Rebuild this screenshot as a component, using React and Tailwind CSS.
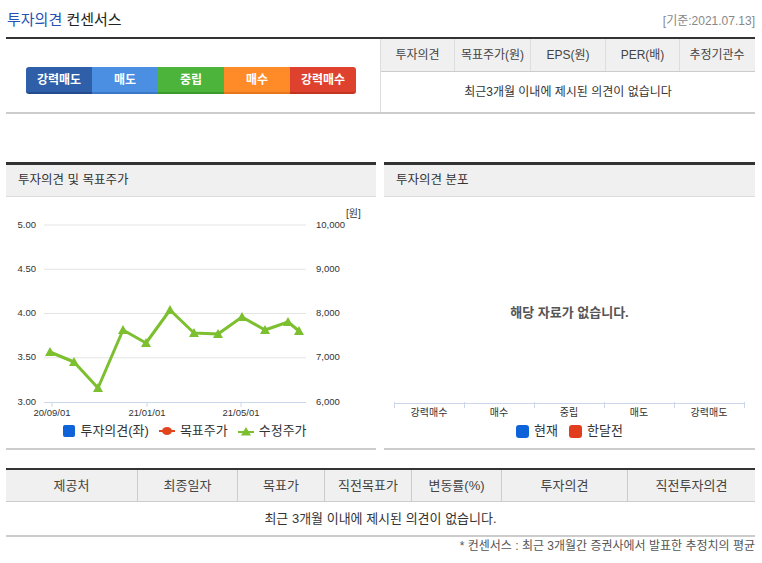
import React from 'react';

const topCols = [
  { label: '투자의견', w: 'w-[74px]' },
  { label: '목표주가(원)', w: 'w-[76px]' },
  { label: 'EPS(원)', w: 'w-[75px]' },
  { label: 'PER(배)', w: 'w-[74px]' },
  { label: '추정기관수', w: 'w-[74px]' },
];

const bottomCols = [
  { label: '제공처', w: 'w-[132px]' },
  { label: '최종일자', w: 'w-[100px]' },
  { label: '목표가', w: 'w-[87px]' },
  { label: '직전목표가', w: 'w-[87px]' },
  { label: '변동률(%)', w: 'w-[90px]' },
  { label: '투자의견', w: 'w-[126px]' },
  { label: '직전투자의견', w: 'w-[127px]' },
];

const buttons = [
  { label: '강력매도', cls: 'bg-[#2f5fa9] border-[#244c8c] rounded-l-[3px]' },
  { label: '매도', cls: 'bg-[#4b8fe2] border-[#3c78c4]' },
  { label: '중립', cls: 'bg-[#4db43b] border-[#3a9a2c]' },
  { label: '매수', cls: 'bg-[#ff8b28] border-[#e5761a]' },
  { label: '강력매수', cls: 'bg-[#df412f] border-[#c33322] rounded-r-[3px]' },
];

// 수정주가 points (x, y) in chart coords
const prices = [
  [44, 155], [68, 165], [92, 191], [117, 133], [140, 146], [164, 113],
  [188, 136], [212, 137], [236, 120], [259, 133], [282, 125], [293, 134],
];

const leftTicks = ['5.00', '4.50', '4.00', '3.50', '3.00'];
const rightTicks = ['10,000', '9,000', '8,000', '7,000', '6,000'];

function Triangle({ x, y, size = 5 }) {
  return (
    <polygon
      points={`${x - size},${y + size * 0.8} ${x + size},${y + size * 0.8} ${x},${y - size}`}
      fill="#7cbf2f"
    />
  );
}

function PriceChart() {
  const gridY = (i) => 28 + i * 44.25;
  return (
    <svg width="370" height="224" className="block">
      {leftTicks.map((t, i) => (
        <g key={t}>
          {i < 4 && <line x1="38" x2="300" y1={gridY(i)} y2={gridY(i)} stroke="#e4e4e4" strokeWidth="1" />}
          <text x="30" y={gridY(i)} textAnchor="end" dominantBaseline="middle" fontSize="9.5" fill="#333">{t}</text>
          <text x="310" y={gridY(i)} textAnchor="start" dominantBaseline="middle" fontSize="9.5" fill="#333">{rightTicks[i]}</text>
        </g>
      ))}
      <text x="340" y="20" fontSize="10" fill="#333">[원]</text>
      <line x1="38" x2="300" y1="205.5" y2="205.5" stroke="#ccd6eb" strokeWidth="1" />
      {[[46, '20/09/01'], [141, '21/01/01'], [235, '21/05/01']].map(([x, l]) => (
        <g key={l}>
          <line x1={x} x2={x} y1="205" y2="210" stroke="#ccd6eb" />
          <text x={x} y="216" textAnchor="middle" dominantBaseline="middle" fontSize="9.5" fill="#333">{l}</text>
        </g>
      ))}
      <polyline
        points={prices.map((p) => p.join(',')).join(' ')}
        fill="none"
        stroke="#7cbf2f"
        strokeWidth="3"
        strokeLinejoin="round"
      />
      {prices.map(([x, y], i) => (
        <Triangle key={i} x={x} y={y} />
      ))}
    </svg>
  );
}

function DistAxis() {
  const ticks = [10, 80, 150, 220, 290, 360];
  const labels = ['강력매수', '매수', '중립', '매도', '강력매도'];
  return (
    <svg width="371" height="19" className="block">
      <line x1="10" x2="360" y1="1.5" y2="1.5" stroke="#ccd6eb" />
      {ticks.map((x) => (
        <line key={x} x1={x + 0.5} x2={x + 0.5} y1="0" y2="6" stroke="#ccd6eb" />
      ))}
      {labels.map((l, i) => (
        <text key={l} x={45 + i * 70} y="11" textAnchor="middle" dominantBaseline="middle" fontSize="10" fill="#333">{l}</text>
      ))}
    </svg>
  );
}

function PanelHeader({ title }) {
  return (
    <div className="h-[35px] border-t-[3px] border-b border-t-[#333] border-b-[#ddd] bg-[#f0f0f0] flex items-center pl-[12px] text-[12.5px] text-[#333]">
      {title}
    </div>
  );
}

export default function App() {
  return (
    <div className="w-[762px] h-[563px] bg-white pl-[6px] pr-[7px] font-['Liberation_Sans','Noto_Sans_CJK_KR',sans-serif] text-[#333]">
      {/* 타이틀 */}
      <div className="h-[37px] flex items-end justify-between pb-[7px]">
        <h2 className="text-[15px] leading-[20px] pl-[1px]">
          <span className="text-[#2352b4]">투자의견</span> <span className="text-[#222]">컨센서스</span>
        </h2>
        <span className="text-[12px] text-[#888] leading-[18px]">[기준:2021.07.13]</span>
      </div>

      {/* 컨센서스 요약 */}
      <div className="border-t-2 border-b-2 border-t-[#333] border-b-[#ccc] flex h-[77px]">
        <div className="w-[375px] border-r border-[#ddd] pl-[20px] pt-[28px]">
          <div className="flex">
            {buttons.map((b) => (
              <div
                key={b.label}
                className={`w-[66px] h-[27px] flex items-center justify-center text-white text-[12px] font-bold border-b-2 ${b.cls}`}
              >
                {b.label}
              </div>
            ))}
          </div>
        </div>
        <div className="flex-1 flex flex-col">
          <div className="flex h-[33px] bg-[#f0f0f0] border-b border-[#ccc]">
            {topCols.map((c, i) => (
              <div
                key={c.label}
                className={`${c.w} flex items-center justify-center text-[12px] text-[#444] ${i < topCols.length - 1 ? 'border-r border-[#ddd]' : ''}`}
              >
                {c.label}
              </div>
            ))}
          </div>
          <div className="flex-1 flex items-center justify-center text-[12px] text-[#333]">
            최근3개월 이내에 제시된 의견이 없습니다
          </div>
        </div>
      </div>

      {/* 차트 패널 */}
      <div className="flex justify-between mt-[48px]">
        <div className="w-[370px] border-b-2 border-[#ccc]">
          <PanelHeader title="투자의견 및 목표주가" />
          <div className="h-[251px]">
            <PriceChart />
            <div className="h-[20px] flex items-center justify-center gap-[5px] text-[13px] text-[#333] pr-[12px]">
              <span className="w-[12px] h-[12px] rounded-[2px] bg-[#0f63d8]" />
              <span className="mr-[5px]">투자의견(좌)</span>
              <svg width="16" height="10">
                <line x1="0" x2="16" y1="5" y2="5" stroke="#e2441e" strokeWidth="2" />
                <ellipse cx="8" cy="5" rx="5" ry="4" fill="#e2441e" />
              </svg>
              <span className="mr-[5px]">목표주가</span>
              <svg width="16" height="10">
                <line x1="0" x2="16" y1="6" y2="6" stroke="#7cbf2f" strokeWidth="2" />
                <polygon points="3,9.5 13,9.5 8,1" fill="#7cbf2f" />
              </svg>
              <span>수정주가</span>
            </div>
          </div>
        </div>

        <div className="w-[371px] border-b-2 border-[#ccc]">
          <PanelHeader title="투자의견 분포" />
          <div className="h-[251px] flex flex-col">
            <div className="h-[205px] pt-[27px] flex items-center justify-center text-[13px] font-bold text-[#555]">
              해당 자료가 없습니다.
            </div>
            <DistAxis />
            <div className="h-[20px] flex items-center justify-center gap-[5px] text-[13px] text-[#333]">
              <span className="w-[13px] h-[13px] rounded-[3px] bg-[#0f63d8]" />
              <span className="mr-[6px]">현재</span>
              <span className="w-[13px] h-[13px] rounded-[3px] bg-[#e23d1c]" />
              <span>한달전</span>
            </div>
          </div>
        </div>
      </div>

      {/* 제공처별 */}
      <div className="mt-[18px] border-t-2 border-b-2 border-t-[#333] border-b-[#ccc]">
        <div className="flex h-[32px] bg-[#f0f0f0] border-b border-[#ccc]">
          {bottomCols.map((c, i) => (
            <div
              key={c.label}
              className={`${c.w} flex items-center justify-center text-[13px] text-[#444] ${i < bottomCols.length - 1 ? 'border-r border-[#ccc]' : ''}`}
            >
              {c.label}
            </div>
          ))}
        </div>
        <div className="h-[33px] flex items-center justify-center text-[13px] text-[#333]">
          최근 3개월 이내에 제시된 의견이 없습니다.
        </div>
      </div>
      <p className="h-[18px] flex items-center justify-end text-[12px] text-[#555]">
        * 컨센서스 : 최근 3개월간 증권사에서 발표한 추정치의 평균
      </p>
    </div>
  );
}
